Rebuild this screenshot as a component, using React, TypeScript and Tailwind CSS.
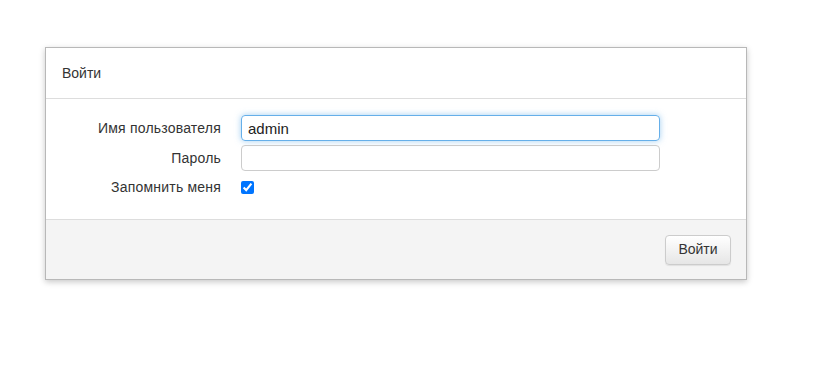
export default function App() {
  return (
    <div className="min-h-[373px] bg-white pt-[47px] pl-[45px] font-['Liberation_Sans',Arial,sans-serif] text-[14px] text-[#333]">
      <div className="w-[702px] border border-[#b8b8b8] bg-white shadow-[0_2px_6px_rgba(0,0,0,0.22)]">
        {/* Header */}
        <div className="flex h-[51px] items-center border-b border-[#ddd] px-[16px]">
          <span>Войти</span>
        </div>

        {/* Body */}
        <div className="flex flex-col gap-[4px] pt-[16px] pb-[20px] tracking-[0.2px]">
          <div className="grid h-[26px] grid-cols-[175px_419px] items-center gap-x-[20px]">
            <label className="text-right">Имя пользователя</label>
            <input
              type="text"
              defaultValue="admin"
              className="h-[26px] w-full rounded-[4px] border border-[#66afe9] px-[6px] text-[15px] tracking-normal text-[#222] shadow-[0_0_6px_rgba(102,175,233,0.6)] outline-none"
            />
          </div>
          <div className="grid h-[26px] grid-cols-[175px_419px] items-center gap-x-[20px]">
            <label className="text-right">Пароль</label>
            <input
              type="password"
              className="h-[26px] w-full rounded-[4px] border border-[#ccc] px-[6px] text-[15px] outline-none"
            />
          </div>
          <div className="grid h-[24px] grid-cols-[175px_419px] items-center gap-x-[20px]">
            <label className="text-right">Запомнить меня</label>
            <div className="flex items-center">
              <input type="checkbox" defaultChecked className="m-0 h-[13px] w-[13px] accent-[#0075ff]" />
            </div>
          </div>
        </div>

        {/* Footer */}
        <div className="flex h-[60px] items-center justify-end border-t border-[#ddd] bg-[#f4f4f4] pr-[15px]">
          <button
            type="button"
            className="h-[30px] w-[66px] rounded-[4px] border border-[#ccc] bg-gradient-to-b from-white to-[#e6e6e6] text-[14px] text-[#333] shadow-[0_1px_1px_rgba(0,0,0,0.08)]"
          >
            Войти
          </button>
        </div>
      </div>
    </div>
  );
}
